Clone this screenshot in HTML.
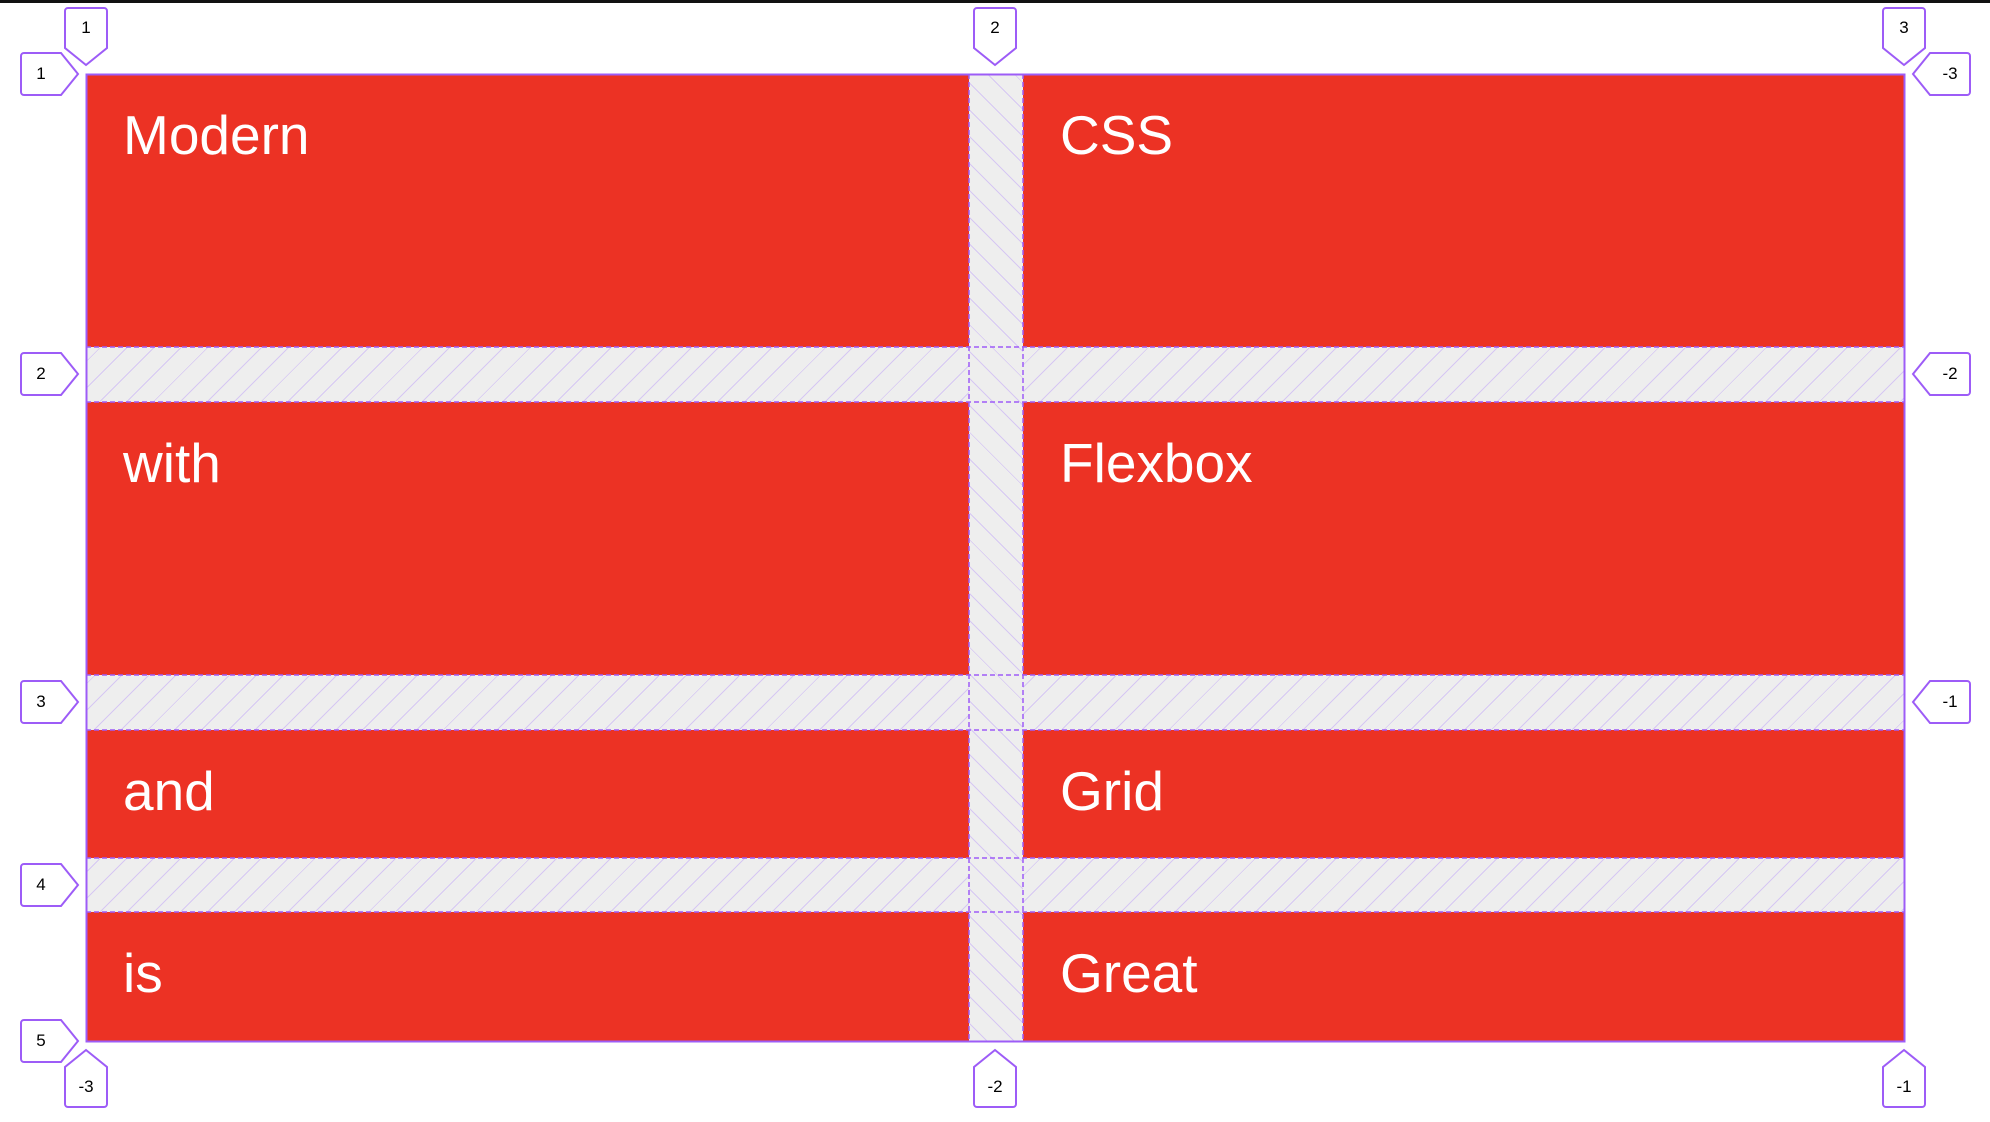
<!DOCTYPE html>
<html><head><meta charset="utf-8"><style>
html,body{margin:0;padding:0;background:#fff;}
body{width:1990px;height:1122px;position:relative;overflow:hidden;font-family:"Liberation Sans",Arial,sans-serif;}
.top{position:absolute;left:0;top:0;width:1990px;height:3px;background:#111;}
.grid{position:absolute;left:86px;top:74px;width:1819px;height:968px;background-color:#eeeeee;
background-image:repeating-linear-gradient(135deg,transparent 0 13px,rgba(160,110,255,.3) 13px 14px,transparent 14px 19px);}
.colgap{position:absolute;left:969px;top:74px;width:54px;height:968px;background-color:#eeeeee;
background-image:repeating-linear-gradient(45deg,transparent 0 13px,rgba(160,110,255,.3) 13px 14px,transparent 14px 19px);}
.cell{position:absolute;background:#ec3224;color:#fff;font-size:55px;box-sizing:border-box;padding:30px 0 0 37px;line-height:62px;}
</style></head><body>
<div class="top"></div>
<div class="grid"></div>
<div class="colgap"></div>
<div class="cell" style="left:86px;top:74px;width:883px;height:273px">Modern</div>
<div class="cell" style="left:1023px;top:74px;width:882px;height:273px">CSS</div>
<div class="cell" style="left:86px;top:402px;width:883px;height:273px">with</div>
<div class="cell" style="left:1023px;top:402px;width:882px;height:273px">Flexbox</div>
<div class="cell" style="left:86px;top:730px;width:883px;height:128px">and</div>
<div class="cell" style="left:1023px;top:730px;width:882px;height:128px">Grid</div>
<div class="cell" style="left:86px;top:912px;width:883px;height:130px">is</div>
<div class="cell" style="left:1023px;top:912px;width:882px;height:130px">Great</div>
<svg width="1990" height="1122" style="position:absolute;left:0;top:0" font-family="Liberation Sans, Arial, sans-serif" font-size="17">
<g stroke="#9d5cf7" fill="none">
<rect x="86.5" y="74.5" width="1818" height="967" stroke-width="2"/>
<g stroke-dasharray="5 3" stroke-width="1.5">
<line x1="969" y1="74" x2="969" y2="1042"/><line x1="1023" y1="74" x2="1023" y2="1042"/>
<line x1="86" y1="347" x2="1905" y2="347"/><line x1="86" y1="402" x2="1905" y2="402"/>
<line x1="86" y1="675" x2="1905" y2="675"/><line x1="86" y1="730" x2="1905" y2="730"/>
<line x1="86" y1="858" x2="1905" y2="858"/><line x1="86" y1="912" x2="1905" y2="912"/>
</g>
<g stroke-width="2" fill="#fff">
<path d="M70 8h34a3 3 0 0 1 3 3v37l-21 17l-21-17v-37a3 3 0 0 1 3-3z"/>
<path d="M979 8h34a3 3 0 0 1 3 3v37l-21 17l-21-17v-37a3 3 0 0 1 3-3z"/>
<path d="M1888 8h34a3 3 0 0 1 3 3v37l-21 17l-21-17v-37a3 3 0 0 1 3-3z"/>
<path d="M70 1107h34a3 3 0 0 0 3-3v-37l-21-17l-21 17v37a3 3 0 0 0 3 3z"/>
<path d="M979 1107h34a3 3 0 0 0 3-3v-37l-21-17l-21 17v37a3 3 0 0 0 3 3z"/>
<path d="M1888 1107h34a3 3 0 0 0 3-3v-37l-21-17l-21 17v37a3 3 0 0 0 3 3z"/>
<path d="M24 53h37l17 21l-17 21h-37a3 3 0 0 1-3-3v-36a3 3 0 0 1 3-3z"/>
<path d="M24 353h37l17 21l-17 21h-37a3 3 0 0 1-3-3v-36a3 3 0 0 1 3-3z"/>
<path d="M24 681h37l17 21l-17 21h-37a3 3 0 0 1-3-3v-36a3 3 0 0 1 3-3z"/>
<path d="M24 864h37l17 21l-17 21h-37a3 3 0 0 1-3-3v-36a3 3 0 0 1 3-3z"/>
<path d="M24 1020h37l17 21l-17 21h-37a3 3 0 0 1-3-3v-36a3 3 0 0 1 3-3z"/>
<path d="M1967 53h-37l-17 21l17 21h37a3 3 0 0 0 3-3v-36a3 3 0 0 0-3-3z"/>
<path d="M1967 353h-37l-17 21l17 21h37a3 3 0 0 0 3-3v-36a3 3 0 0 0-3-3z"/>
<path d="M1967 681h-37l-17 21l17 21h37a3 3 0 0 0 3-3v-36a3 3 0 0 0-3-3z"/>
</g>
</g>
<g fill="#000" text-anchor="middle">
<text x="86" y="33">1</text><text x="995" y="33">2</text><text x="1904" y="33">3</text>
<text x="86" y="1092">-3</text><text x="995" y="1092">-2</text><text x="1904" y="1092">-1</text>
<text x="41" y="79">1</text><text x="41" y="379">2</text><text x="41" y="707">3</text><text x="41" y="890">4</text><text x="41" y="1046">5</text>
<text x="1950" y="79">-3</text><text x="1950" y="379">-2</text><text x="1950" y="707">-1</text>
</g>
</svg>
</body></html>
